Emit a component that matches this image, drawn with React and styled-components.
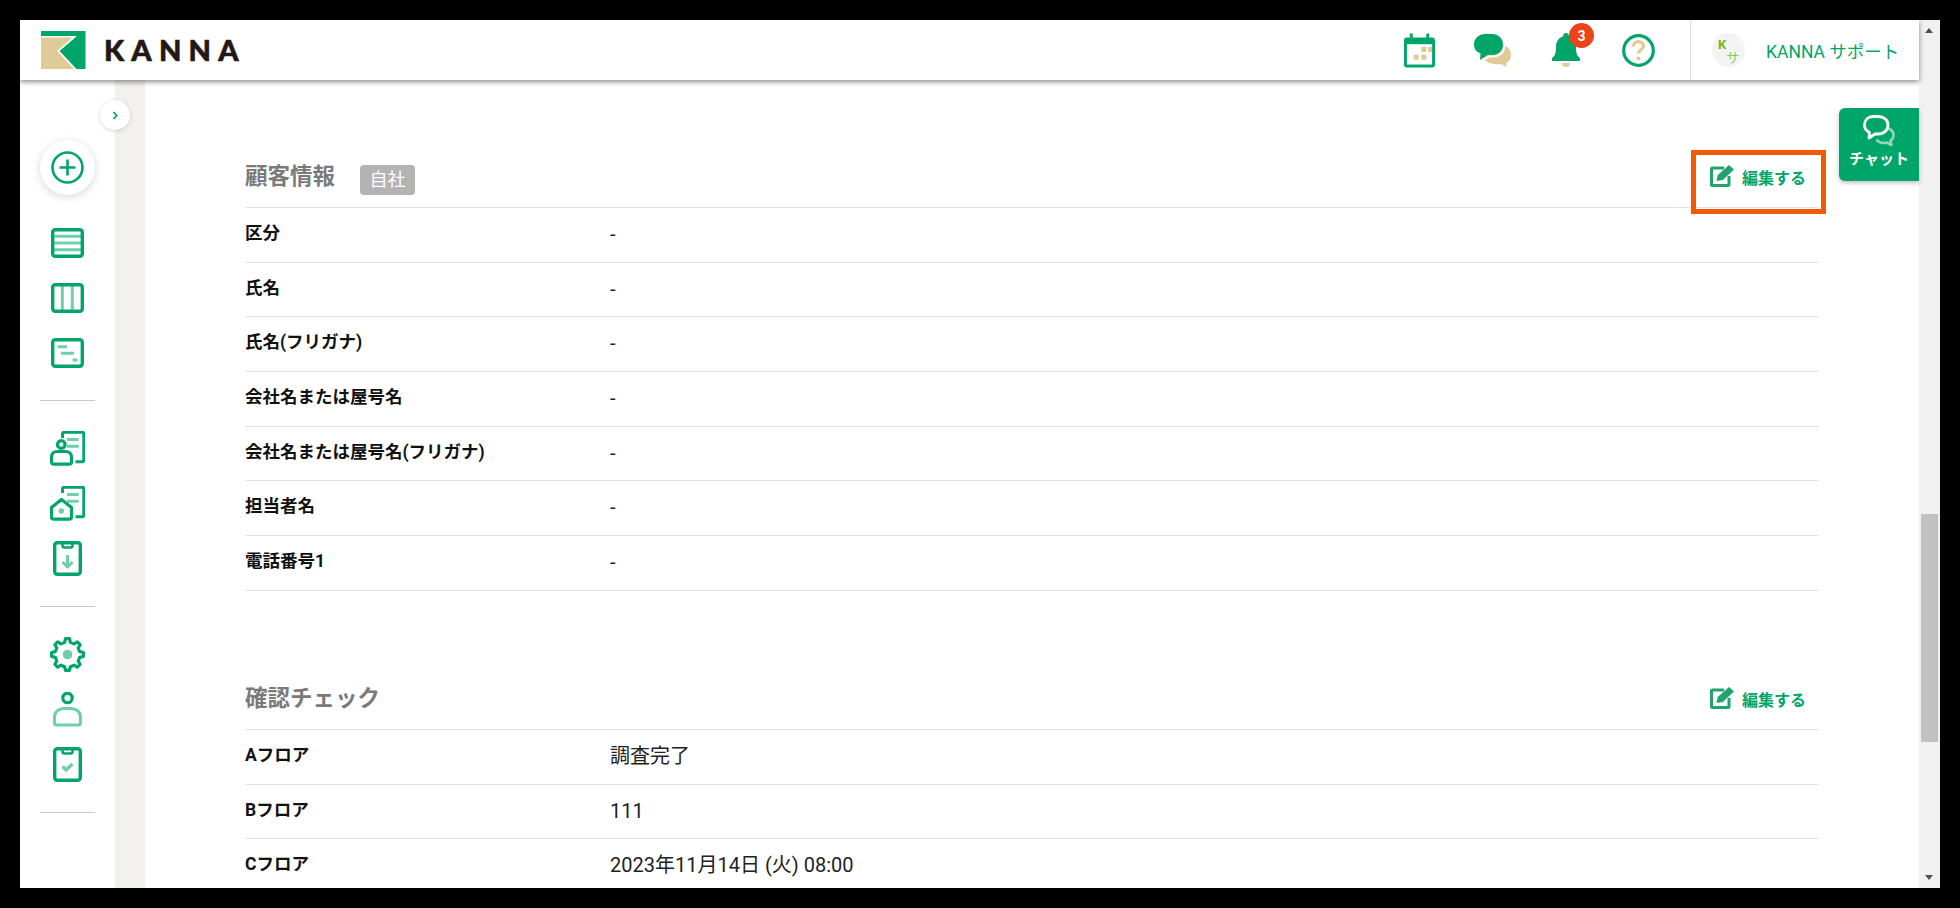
import React from "react"
import styled, { createGlobalStyle } from "styled-components"

const GREEN = "#00a56a"
const LIGHT = "#6fcfa9"
const TAN = "#dfcb97"

const gearPath = () => {
  const pts = []
  const teeth = 8
  for (let i = 0; i < teeth; i++) {
    const a = (i / teeth) * Math.PI * 2 - Math.PI / 2
    const step = (Math.PI * 2) / teeth
    const at = (r, d) => `${(17.5 + r * Math.cos(a + d)).toFixed(1)} ${(17.5 + r * Math.sin(a + d)).toFixed(1)}`
    pts.push(at(16, -step * 0.16), at(16, step * 0.16), at(12.5, step * 0.3), at(12.5, step * 0.7))
  }
  return `M${pts.join("L")}Z`
}

const Logo = () => (
  <svg width="45" height="38" viewBox="0 0 45 38">
    <path d="M0 0H44.5V38H35.5L18.5 20L36 5H0Z" fill={GREEN} />
    <path d="M0 6.5H31.5L16 20L33 38H0Z" fill={TAN} />
  </svg>
)

const CalendarIcon = () => (
  <svg width="32" height="35" viewBox="0 0 32 35">
    <path d="M6 0h3v4H23V0h3v4h3a3 3 0 0 1 3 3v25a3 3 0 0 1-3 3H3a3 3 0 0 1-3-3V7a3 3 0 0 1 3-3h3Z" fill={GREEN} />
    <rect x="3" y="11" width="26" height="21" fill="#fff" />
    <path d="M18 14h5v5h-5ZM25 14h4v5h-4ZM10 22h5v5h-5ZM18 22h5v5h-5Z" fill={TAN} />
  </svg>
)

const ChatsIcon = () => (
  <svg width="37" height="33" viewBox="0 0 37 33">
    <path d="M24 10c7 0 13 4 13 11c0 4-2 7-5 8l1 4l-6-3c-8 1-16-1-18-7Z" fill={TAN} />
    <path d="M11 0h7c6.500 0 11 4.500 11 10.500S24.500 21 18 21H13.500L6 26l.5-6.500C2.500 18 0 15 0 10.500C0 4.500 5 0 11 0Z" fill={GREEN} />
    <path d="M29 10.500C29 17 24.500 21 18 21H13.500L6 26" fill="none" stroke="#fff" strokeWidth="2" transform="translate(1.200 1.400)" />
  </svg>
)

const BellIcon = () => (
  <svg width="28" height="34" viewBox="0 0 28 34">
    <path d="M14 0c2 0 3 1.500 3 3.500c5 1.500 7 5.500 7 10.500c0 6 1 9 4 11v3H0v-3c3-2 4-5 4-11c0-5 2-9 7-10.500C11 1.500 12 0 14 0Z" fill={GREEN} />
    <path d="M10 30h8c0 2.500-1.500 4-4 4s-4-1.500-4-4Z" fill={TAN} />
  </svg>
)

const HelpIcon = () => (
  <svg width="33" height="33" viewBox="0 0 33 33" fill="none">
    <circle cx="16.500" cy="16.500" r="14.800" stroke={GREEN} strokeWidth="3.200" />
    <path d="M11.500 12.500c0-3 2.200-4.800 5-4.800s5 1.800 5 4.300c0 3.500-5 3.800-5 7.500" stroke={TAN} strokeWidth="3.200" />
    <circle cx="16.500" cy="24.500" r="2" fill={TAN} />
  </svg>
)

const ChatButtonIcon = () => (
  <svg width="32" height="32" viewBox="0 0 32 32" fill="none">
    <path d="M24 13c4 1 6.500 3.500 6.500 7c0 2.500-1 4.500-3 5.500l1 4.500l-5-2.500c-4 1-8 0-10-3" stroke="#8fd8bb" strokeWidth="2.600" strokeLinejoin="round" />
    <path d="M10 1.500h5c6 0 10 3.500 10 8.500s-4 9-10 9h-3l-6 4l.5-5.500C3.500 16 1.500 13.500 1.500 10C1.500 5 5 1.500 10 1.500Z" stroke="#fff" strokeWidth="2.800" strokeLinejoin="round" />
  </svg>
)

const EditIcon = () => (
  <svg width="25" height="22" viewBox="0 0 25 22" fill="none">
    <path d="M14 3H2.500a1 1 0 0 0-1 1v15.500a1 1 0 0 0 1 1H18a1 1 0 0 0 1-1V11" stroke="#20a36c" strokeWidth="3" />
    <path d="M6.500 16l1.200-6L19 0l5 4.600L12.800 15Z" fill="#20a36c" />
  </svg>
)

const Chevron = () => (
  <svg width="7" height="9" viewBox="0 0 7 9" fill="none">
    <path d="M1.500 1l3.200 3.500L1.500 8" stroke={GREEN} strokeWidth="1.800" />
  </svg>
)

const PlusIcon = () => (
  <svg width="33" height="33" viewBox="0 0 33 33" fill="none">
    <circle cx="16.500" cy="16.500" r="15" stroke={GREEN} strokeWidth="2.600" />
    <path d="M16.500 8.500v16M8.500 16.500h16" stroke={GREEN} strokeWidth="2.600" />
  </svg>
)

const Frame33 = ({ children }) => (
  <svg width="33" height="30" viewBox="0 0 33 30" fill="none">
    {children}
    <rect x="1.700" y="1.700" width="29.600" height="26.600" rx="2.500" stroke={GREEN} strokeWidth="3.400" />
  </svg>
)

const ListIcon = () => (
  <Frame33>
    <path d="M2 8.300H31M2 15H31M2 21.700H31" stroke={LIGHT} strokeWidth="3" />
  </Frame33>
)

const ColumnsIcon = () => (
  <Frame33>
    <path d="M11.300 2V28M21.300 2V28" stroke={LIGHT} strokeWidth="3" />
  </Frame33>
)

const GanttIcon = () => (
  <Frame33>
    <path d="M6.700 8.700H16M10 15.300H23M21.700 22H26.300" stroke={LIGHT} strokeWidth="3" />
  </Frame33>
)

const DocBack = () => (
  <>
    <path d="M12.500 7V3a1.800 1.800 0 0 1 1.800-1.800H32a1.800 1.800 0 0 1 1.800 1.800V29a1.800 1.800 0 0 1-1.800 1.800H25.500" stroke={GREEN} strokeWidth="3" />
    <path d="M17 8.600H28.700M17 15.200H28.700" stroke={LIGHT} strokeWidth="3" />
  </>
)

const PersonDocIcon = () => (
  <svg width="35" height="35" viewBox="0 0 35 35" fill="none">
    <DocBack />
    <circle cx="11.300" cy="13.500" r="3.800" stroke={GREEN} strokeWidth="3.200" />
    <path d="M7 20.500h8.500c3.500 0 6 2.300 6 5.500v5a2.200 2.200 0 0 1-2.200 2.200H3.600A2.200 2.200 0 0 1 1.500 31v-5c0-3.200 2-5.500 5.500-5.500Z" stroke={GREEN} strokeWidth="3.200" />
  </svg>
)

const HouseDocIcon = () => (
  <svg width="35" height="35" viewBox="0 0 35 35" fill="none">
    <DocBack />
    <path d="M1.500 21.500L11.500 13.500L21.500 21.500V31a2.200 2.200 0 0 1-2.200 2.200H3.700A2.200 2.200 0 0 1 1.500 31Z" stroke={GREEN} strokeWidth="3.200" strokeLinejoin="round" />
    <circle cx="11.300" cy="25" r="2.700" fill={LIGHT} />
  </svg>
)

const Clipboard = ({ children }) => (
  <svg width="29" height="35" viewBox="0 0 29 35" fill="none">
    <rect x="1.700" y="1.700" width="25.600" height="31.600" rx="2.500" stroke={GREEN} strokeWidth="3.400" />
    <path d="M9.500 2v2.500a2 2 0 0 0 2 2h6a2 2 0 0 0 2-2V2" stroke={GREEN} strokeWidth="2.600" />
    {children}
  </svg>
)

const ClipboardDownIcon = () => (
  <Clipboard>
    <path d="M14.500 14V26M9.500 21l5 5l5-5" stroke={LIGHT} strokeWidth="3" />
  </Clipboard>
)

const ClipboardCheckIcon = () => (
  <Clipboard>
    <path d="M9.500 19.500l3.500 3.500l6.500-6" stroke={LIGHT} strokeWidth="3.400" />
  </Clipboard>
)

const GearIcon = () => (
  <svg width="35" height="35" viewBox="0 0 35 35" fill="none">
    <path d={gearPath()} stroke={GREEN} strokeWidth="3.200" strokeLinejoin="round" />
    <circle cx="17.500" cy="17.500" r="4.800" fill={LIGHT} />
  </svg>
)

const UserIcon = () => (
  <svg width="29" height="35" viewBox="0 0 29 35" fill="none">
    <circle cx="14.500" cy="6" r="4.700" stroke={GREEN} strokeWidth="3.200" />
    <path d="M11 16.500h7c5.500 0 9.500 3.500 9.500 8.500v6a2 2 0 0 1-2 2H3.500a2 2 0 0 1-2-2v-6c0-5 4-8.500 9.500-8.500Z" stroke={LIGHT} strokeWidth="3.200" />
  </svg>
)

const navGroups = [
  [ListIcon, ColumnsIcon, GanttIcon],
  [PersonDocIcon, HouseDocIcon, ClipboardDownIcon],
  [GearIcon, UserIcon, ClipboardCheckIcon],
]

const customerRows = [
  ["区分", "-"],
  ["氏名", "-"],
  ["氏名(フリガナ)", "-"],
  ["会社名または屋号名", "-"],
  ["会社名または屋号名(フリガナ)", "-"],
  ["担当者名", "-"],
  ["電話番号1", "-"],
]

const checkRows = [
  ["Aフロア", "調査完了"],
  ["Bフロア", "111"],
  ["Cフロア", "2023年11月14日 (火) 08:00"],
]

const Section = ({ title, badge, rows, highlight }) => (
  <SectionBox>
    <SectionHead>
      <SectionTitle>{title}</SectionTitle>
      {badge && <Badge>{badge}</Badge>}
      <EditButton>
        <EditIcon />
        <span>編集する</span>
      </EditButton>
      {highlight && <Callout />}
    </SectionHead>
    {rows.map(([label, value]) => (
      <Row key={label}>
        <RowLabel>{label}</RowLabel>
        <RowValue>{value}</RowValue>
      </Row>
    ))}
  </SectionBox>
)

const App = () => {
  return (
    <Window>
      <GlobalStyle />
      <Page>
        <Header>
          <LogoLink>
            <Logo />
            <LogoText>KANNA</LogoText>
          </LogoLink>
          <HeaderIcons>
            <HeaderIcon $width={31} $mr={39}>
              <CalendarIcon />
            </HeaderIcon>
            <HeaderIcon $width={37} $mr={41}>
              <ChatsIcon />
            </HeaderIcon>
            <HeaderIcon $width={28} $mr={42}>
              <BellIcon />
              <Count>3</Count>
            </HeaderIcon>
            <HeaderIcon $width={33} $mr={35}>
              <HelpIcon />
            </HeaderIcon>
          </HeaderIcons>
          <UserBox>
            <Avatar>
              <AvatarK>K</AvatarK>
              <AvatarSa>サ</AvatarSa>
            </Avatar>
            <UserName>KANNA サポート</UserName>
          </UserBox>
        </Header>
        <Body>
          <Sidebar>
            <Toggle>
              <Chevron />
            </Toggle>
            <AddButton>
              <PlusIcon />
            </AddButton>
            {navGroups.map((group, i) => (
              <NavGroup key={i}>
                {group.map((Icon, j) => (
                  <NavItem key={j}>
                    <Icon />
                  </NavItem>
                ))}
              </NavGroup>
            ))}
          </Sidebar>
          <Gutter />
          <Main>
            <Section title="顧客情報" badge="自社" rows={customerRows} highlight />
            <Section title="確認チェック" rows={checkRows} />
          </Main>
          <ChatTab>
            <ChatButtonIcon />
            <span>チャット</span>
          </ChatTab>
        </Body>
      </Page>
      <Scrollbar>
        <ArrowUp />
        <Thumb />
        <ArrowDown />
      </Scrollbar>
    </Window>
  )
}

export default App

const GlobalStyle = createGlobalStyle`
  html, body {
    margin: 0;
    height: 100%;
    background: #000;
    overflow: hidden;
  }
  body {
    padding: 20px;
    box-sizing: border-box;
    font-family: Roboto, "Noto Sans CJK JP", sans-serif;
  }
`

const Window = styled.div`
  display: grid;
  grid-template-columns: 1899px 21px;
  width: 1920px;
  height: 868px;
  background: #fff;
  overflow: hidden;
`

const Page = styled.div`
  display: flex;
  flex-direction: column;
  min-width: 0;
  height: 868px;
`

const Header = styled.header`
  position: relative;
  z-index: 3;
  flex: 0 0 60px;
  display: flex;
  align-items: center;
  background: #fff;
  box-shadow: 0 2px 5px rgba(0, 0, 0, 0.45);
`

const LogoLink = styled.div`
  display: flex;
  align-items: center;
  margin-left: 21px;
`

const LogoText = styled.span`
  margin: -2px 0 0 18px;
  font-family: Lato, sans-serif;
  font-size: 29px;
  font-weight: 900;
  letter-spacing: 7.2px;
  color: #231815;
  -webkit-text-stroke: 0.6px #231815;
`

const HeaderIcons = styled.div`
  display: flex;
  align-items: center;
  margin-left: auto;
`

const HeaderIcon = styled.div`
  position: relative;
  display: flex;
  width: ${(p) => p.$width}px;
  margin-right: ${(p) => p.$mr}px;
`

const Count = styled.span`
  position: absolute;
  top: -10px;
  left: 17px;
  display: flex;
  align-items: center;
  justify-content: center;
  width: 25px;
  height: 25px;
  border-radius: 50%;
  background: #ee4316;
  color: #fff;
  font-size: 14px;
  font-weight: 700;
`

const UserBox = styled.div`
  display: flex;
  align-items: center;
  align-self: stretch;
  width: 229px;
  padding-left: 21px;
  box-sizing: border-box;
  border-left: 1px solid #dcdcdc;
`

const Avatar = styled.div`
  display: grid;
  grid-template-columns: 1fr 1fr;
  grid-template-rows: 1fr 1fr;
  width: 33px;
  height: 34px;
  padding: 6px 7px 3px 6px;
  box-sizing: border-box;
  border-radius: 50%;
  background: #f3f3f3;
`

const AvatarK = styled.span`
  grid-area: 1 / 1;
  font-size: 13px;
  line-height: 12px;
  font-weight: 700;
  color: #75b80f;
`

const AvatarSa = styled.span`
  grid-area: 2 / 2;
  font-size: 13px;
  line-height: 13px;
  color: #7fcf60;
`

const UserName = styled.span`
  margin-left: 21px;
  font-size: 17.5px;
  color: ${GREEN};
  white-space: nowrap;
`

const Body = styled.div`
  position: relative;
  flex: 1;
  display: flex;
  min-height: 0;
`

const Sidebar = styled.nav`
  position: relative;
  z-index: 2;
  flex: 0 0 95px;
  display: flex;
  flex-direction: column;
  align-items: center;
  padding-top: 60px;
  box-sizing: border-box;
  background: #fff;
`

const Toggle = styled.button`
  position: absolute;
  top: 20px;
  right: -15px;
  display: flex;
  align-items: center;
  justify-content: center;
  width: 30px;
  height: 30px;
  padding: 0;
  border: 0;
  border-radius: 50%;
  background: #fff;
  box-shadow: 0 1px 4px rgba(0, 0, 0, 0.16);
`

const AddButton = styled.button`
  display: flex;
  align-items: center;
  justify-content: center;
  flex: 0 0 55px;
  width: 55px;
  padding: 0;
  border: 0;
  border-radius: 50%;
  background: #fff;
  box-shadow: 0 2px 8px rgba(0, 0, 0, 0.16);
`

const NavGroup = styled.div`
  display: flex;
  flex-direction: column;
  width: 55px;
  padding: 20px 0;
  border-bottom: 1px solid #c8c8c8;
`

const NavItem = styled.div`
  flex: 0 0 55px;
  display: flex;
  align-items: center;
  justify-content: center;
`

const Gutter = styled.div`
  flex: 0 0 30px;
  background: #f2f1ee;
`

const Main = styled.main`
  flex: 1;
  min-width: 0;
  padding: 68px 100px 0;
  overflow: hidden;
  background: #fff;
`

const SectionBox = styled.section`
  & + & {
    margin-top: 79.4px;
  }
`

const SectionHead = styled.div`
  position: relative;
  display: flex;
  align-items: flex-start;
  height: 60px;
  padding-top: 13px;
  box-sizing: border-box;
  border-bottom: 1px solid #e2e2e2;
`

const SectionTitle = styled.h2`
  margin: 0;
  font-size: 22.5px;
  line-height: 30px;
  font-weight: 700;
  color: #7a7a7a;
`

const Badge = styled.span`
  margin: 4px 0 0 25px;
  width: 55px;
  height: 30px;
  border-radius: 4px;
  background: #b3b3b3;
  color: #fff;
  font-size: 18px;
  line-height: 30px;
  text-align: center;
`

const EditButton = styled.div`
  display: flex;
  align-items: center;
  column-gap: 7px;
  margin: 2px 13px 0 auto;
  color: ${GREEN};
  font-size: 16px;
  font-weight: 700;

  span {
    margin-top: 2px;
  }
`

const Callout = styled.div`
  position: absolute;
  top: 2px;
  right: -7px;
  width: 135px;
  height: 64px;
  box-sizing: border-box;
  border: 5px solid #f15a00;
`

const Row = styled.div`
  display: grid;
  grid-template-columns: 365px 1fr;
  height: 54.67px;
  box-sizing: border-box;
  border-bottom: 1px solid #e2e2e2;
`

const RowLabel = styled.div`
  padding-top: 12px;
  font-size: 17.5px;
  line-height: 26px;
  font-weight: 700;
  color: #111;
`

const RowValue = styled.div`
  padding-top: 11px;
  font-size: 20px;
  line-height: 30px;
  color: #222;
`

const ChatTab = styled.div`
  position: absolute;
  z-index: 2;
  top: 28px;
  right: 0;
  display: flex;
  flex-direction: column;
  align-items: center;
  width: 80px;
  height: 73px;
  padding-top: 7px;
  box-sizing: border-box;
  border-radius: 6px 0 0 6px;
  background: ${GREEN};
  box-shadow: 0 2px 4px rgba(0, 0, 0, 0.25);
  color: #fff;
  font-size: 15px;
  font-weight: 700;
  line-height: 24px;
`

const Scrollbar = styled.div`
  position: relative;
  background: #f1f1f1;
`

const ArrowUp = styled.div`
  position: absolute;
  top: 8px;
  left: 6px;
  border-left: 4.500px solid transparent;
  border-right: 4.500px solid transparent;
  border-bottom: 5px solid #505050;
`

const ArrowDown = styled.div`
  position: absolute;
  bottom: 8px;
  left: 6px;
  border-left: 4.500px solid transparent;
  border-right: 4.500px solid transparent;
  border-top: 5px solid #505050;
`

const Thumb = styled.div`
  position: absolute;
  top: 494px;
  left: 2px;
  width: 17px;
  height: 228px;
  background: #c1c1c1;
`
